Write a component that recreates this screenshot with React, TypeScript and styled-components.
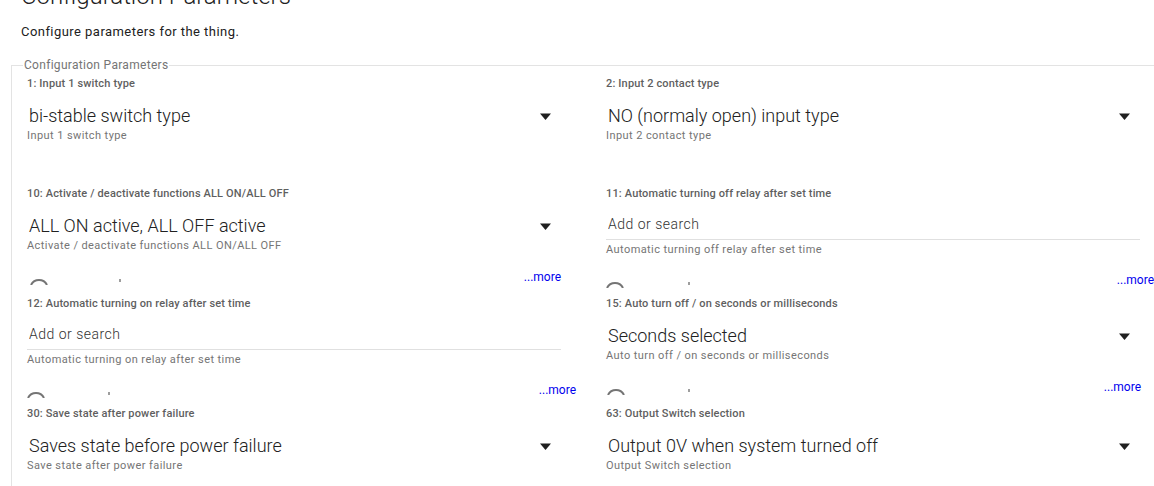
import React from "react";
import styled, { createGlobalStyle } from "styled-components";

const GlobalStyle = createGlobalStyle`
  html, body {
    margin: 0;
    padding: 0;
    background: #ffffff;
    overflow: hidden;
  }
  body {
    font-family: Roboto, "Liberation Sans", Arial, sans-serif;
    color: #212121;
  }
`;

type Param = {
  id: number;
  label: string;
  kind: "select" | "text";
  value?: string;
  helper: string;
  pending?: boolean;
  spinnerX?: number;
  dotX?: number;
  moreEnd?: number;
};

const params: Param[] = [
  { id: 1, label: "Input 1 switch type", kind: "select", value: "bi-stable switch type", helper: "Input 1 switch type" },
  { id: 2, label: "Input 2 contact type", kind: "select", value: "NO (normaly open) input type", helper: "Input 2 contact type" },
  {
    id: 10,
    label: "Activate / deactivate functions ALL ON/ALL OFF",
    kind: "select",
    value: "ALL ON active, ALL OFF active",
    helper: "Activate / deactivate functions ALL ON/ALL OFF",
    pending: true,
    spinnerX: 3,
    dotX: 92,
    moreEnd: 534,
  },
  {
    id: 11,
    label: "Automatic turning off relay after set time",
    kind: "text",
    helper: "Automatic turning off relay after set time",
    pending: true,
    spinnerX: 0,
    dotX: 82,
    moreEnd: 548,
  },
  {
    id: 12,
    label: "Automatic turning on relay after set time",
    kind: "text",
    helper: "Automatic turning on relay after set time",
    pending: true,
    spinnerX: 0,
    dotX: 81,
    moreEnd: 549,
  },
  {
    id: 15,
    label: "Auto turn off / on seconds or milliseconds",
    kind: "select",
    value: "Seconds selected",
    helper: "Auto turn off / on seconds or milliseconds",
    pending: true,
    spinnerX: 1,
    dotX: 82,
    moreEnd: 535,
  },
  { id: 30, label: "Save state after power failure", kind: "select", value: "Saves state before power failure", helper: "Save state after power failure" },
  { id: 63, label: "Output Switch selection", kind: "select", value: "Output 0V when system turned off", helper: "Output Switch selection" },
];

const Page = styled.div`
  padding: 0 0 0 11px;
  width: 1220px;
`;

const Header = styled.header`
  padding-left: 10px;
`;

const Title = styled.h1`
  margin: -19px 0 0;
  font-size: 24px;
  line-height: 30px;
  font-weight: 300;
  color: #212121;
`;

const Subtitle = styled.p`
  margin: 13px 0 0;
  font-size: 13px;
  line-height: 16px;
  letter-spacing: 0.45px;
  color: #212121;
`;

const Fieldset = styled.fieldset`
  margin: 18px 0 0;
  padding: 5px 0 0 15px;
  border: 1px solid #e3e3e3;
  min-width: 0;
`;

const Legend = styled.legend`
  margin-left: -4px;
  padding: 0 1px;
  font-size: 12px;
  line-height: 14px;
  letter-spacing: 0.3px;
  color: #757575;
`;

const Grid = styled.div`
  display: grid;
  grid-template-columns: 579px 579px;
  grid-auto-rows: 110px;
`;

const Cell = styled.div`
  width: 534px;
  display: flex;
  flex-direction: column;
`;

const Label = styled.div`
  font-size: 11px;
  line-height: 14px;
  font-weight: 500;
  letter-spacing: 0.15px;
  color: #5f5f5f;
  white-space: nowrap;
`;

const Select = styled.div`
  margin-top: 13px;
  height: 24px;
  display: flex;
  align-items: center;
  padding-left: 2px;
`;

const SelectValue = styled.span`
  flex: 1;
  font-size: 18px;
  line-height: 24px;
  font-weight: 300;
  color: #212121;
  white-space: nowrap;
`;

const Arrow = styled.svg`
  width: 11px;
  height: 7px;
  margin-right: 10px;
  flex: none;
`;

const TextInput = styled.input`
  margin-top: 13px;
  box-sizing: border-box;
  width: 100%;
  height: 26px;
  padding: 0 0 5px 2px;
  border: none;
  border-bottom: 1px solid #e0e0e0;
  outline: none;
  background: transparent;
  font-family: inherit;
  font-size: 14px;
  line-height: 20px;
  font-weight: 300;
  letter-spacing: 0.5px;
  color: #212121;

  &::placeholder {
    color: #333333;
    opacity: 1;
  }
`;

const Helper = styled.div<{ $gap: number }>`
  margin-top: ${(p) => p.$gap}px;
  font-size: 11px;
  line-height: 14px;
  letter-spacing: 0.42px;
  color: #757575;
  white-space: nowrap;
`;

const Footer = styled.div<{ $width: number; $gap: number }>`
  margin-top: ${(p) => p.$gap}px;
  width: ${(p) => p.$width}px;
  height: 16px;
  display: flex;
  align-items: flex-start;
`;

const Spinner = styled.svg<{ $x: number }>`
  flex: none;
  width: 18px;
  height: 10px;
  margin-top: 5px;
  margin-left: ${(p) => p.$x}px;
`;

const Dot = styled.span<{ $x: number }>`
  flex: none;
  width: 2px;
  height: 3px;
  margin-top: 9px;
  margin-left: ${(p) => p.$x}px;
  background: #9e9e9e;
`;

const More = styled.a`
  margin-left: auto;
  font-size: 12px;
  line-height: 14px;
  color: #0000ee;
  text-decoration: none;
  white-space: nowrap;
  cursor: pointer;
`;

function ParamField({ p }: { p: Param }) {
  const spinnerX = p.spinnerX ?? 0;
  const dotX = p.dotX ?? 82;
  const isText = p.kind === "text";
  return (
    <Cell>
      <Label>
        {p.id}: {p.label}
      </Label>
      {isText ? (
        <TextInput placeholder="Add or search" />
      ) : (
        <Select>
          <SelectValue>{p.value}</SelectValue>
          <Arrow viewBox="0 0 11 7">
            <path d="M0 0.5 H11 L5.5 7 Z" fill="#212121" />
          </Arrow>
        </Select>
      )}
      <Helper $gap={isText ? 3 : 1}>{p.helper}</Helper>
      {p.pending && (
        <Footer $width={p.moreEnd ?? 534} $gap={isText ? 16 : 17}>
          <Spinner $x={spinnerX} viewBox="0 0 18 10">
            <path d="M1 10 A 9 9 0 0 1 17 10" fill="none" stroke="#757575" strokeWidth="2" />
          </Spinner>
          <Dot $x={dotX - spinnerX - 18} />
          <More>...more</More>
        </Footer>
      )}
    </Cell>
  );
}

export default function App() {
  return (
    <>
      <GlobalStyle />
      <Page>
        <Header>
          <Title>Configuration Parameters</Title>
          <Subtitle>Configure parameters for the thing.</Subtitle>
        </Header>
        <Fieldset>
          <Legend>Configuration Parameters</Legend>
          <Grid>
            {params.map((p) => (
              <ParamField key={p.id} p={p} />
            ))}
          </Grid>
        </Fieldset>
      </Page>
    </>
  );
}
